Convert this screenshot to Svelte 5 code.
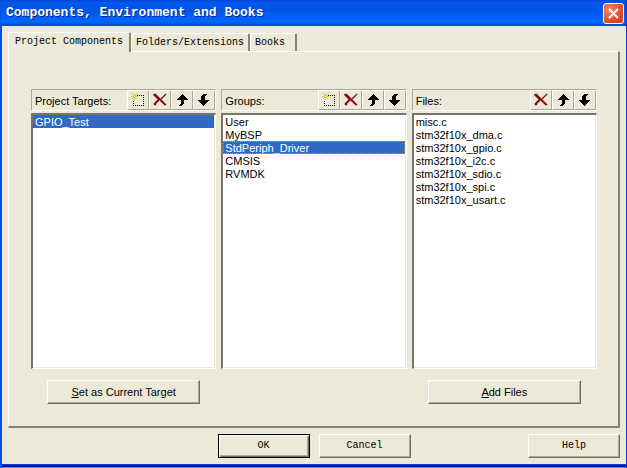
<script>
  const tabs = ['Project Components', 'Folders/Extensions', 'Books'];
  let activeTab = $state(0);
  let columns = $state([
    { title: 'Project Targets:', tools: ['new', 'delete', 'up', 'down'], items: ['GPIO_Test'], selected: 0, focused: false, action: ['S', 'et as Current Target'] },
    { title: 'Groups:', tools: ['new', 'delete', 'up', 'down'], items: ['User', 'MyBSP', 'StdPeriph_Driver', 'CMSIS', 'RVMDK'], selected: 2, focused: true, action: null },
    { title: 'Files:', tools: ['delete', 'up', 'down'], items: ['misc.c', 'stm32f10x_dma.c', 'stm32f10x_gpio.c', 'stm32f10x_i2c.c', 'stm32f10x_sdio.c', 'stm32f10x_spi.c', 'stm32f10x_usart.c'], selected: -1, focused: false, action: ['A', 'dd Files'] }
  ]);
</script>

{#snippet icon(name)}
  <svg width="16" height="16" viewBox="0 0 16 16" shape-rendering="crispEdges" aria-hidden="true">
    {#if name === 'new'}
      <path d="M7 3h1v1h-1zM9 3h1v1h-1zM11 3h1v1h-1zM13 3h1v1h-1zM13 5h1v1h-1zM13 7h1v1h-1zM13 9h1v1h-1zM13 11h1v1h-1zM13 13h1v1h-1zM11 13h1v1h-1zM9 13h1v1h-1zM7 13h1v1h-1zM5 13h1v1h-1zM3 13h1v1h-1zM3 11h1v1h-1zM3 9h1v1h-1z" fill="#000" />
      <path d="M4 1h1v7h-1zM1 4h7v1h-7zM1 1h1v1h-1zM2 2h1v1h-1zM3 3h1v1h-1zM5 3h1v1h-1zM6 2h1v1h-1zM7 1h1v1h-1zM3 5h1v1h-1zM2 6h1v1h-1zM5 5h1v1h-1zM6 6h1v1h-1z" fill="#d3ce4f" />
      <path d="M4 4h1v1h-1z" fill="#fffbd0" />
    {:else if name === 'delete'}
      <path d="M2 2h2v1h1v1h1v1h1v1h1v1h1v-1h1v-1h1v-1h1v-1h1v-1h1v1h-1v1h-1v1h-1v1h-1v1h-1v1h1v1h1v1h1v1h1v1h1v1h-2v-1h-1v-1h-1v-1h-1v-1h-1v-1h-1v1h-1v1h-1v1h-1v2h-2v-2h1v-1h1v-1h1v-1h1v-1h-1v-1h-1v-1h-1v-1h-1v-1h-1z" fill="#850b12" stroke="#850b12" stroke-width="1" shape-rendering="auto" stroke-opacity="0.5" />
    {:else if name === 'up'}
      <path d="M8 2h1v1h1v1h1v1h1v1h1v1h1v1h-4v4h-1v1h-1v1h-3v-1h1v-1h1v-4h-4v-1h1v-1h1v-1h1v-1h1v-1h1v-1h1z" fill="#000" />
    {:else}
      <path d="M10 2h-3v1h-1v1h-1v4h-3v1h1v1h1v1h1v1h1v1h1v1h1v-1h1v-1h1v-1h1v-1h1v-1h1v-1h-4v-4h1v-1h1z" fill="#000" />
    {/if}
  </svg>
{/snippet}

<main class="window">
  <header class="titlebar">
    <h1>Components, Environment and Books</h1>
    <button class="close" aria-label="Close">
      <svg width="17" height="17" viewBox="0 0 17 17" aria-hidden="true"><path d="M4 4l9 9M13 4l-9 9" stroke="#fff" stroke-width="2" /></svg>
    </button>
  </header>

  <div class="body">
    <div class="tabs" role="tablist">
      {#each tabs as tab, i}
        <button class="tab" class:active={activeTab === i} role="tab" aria-selected={activeTab === i} onclick={() => (activeTab = i)}>{tab}</button>
      {/each}
    </div>

    <section class="panel" role="tabpanel" aria-label={tabs[activeTab]}>
      {#each columns as column}
        <div class="column">
          <div class="heading">
            <h2>{column.title}</h2>
            {#each column.tools as tool}
              <button class="tool" aria-label={tool}>{@render icon(tool)}</button>
            {/each}
          </div>
          <div class="list" role="listbox" aria-label={column.title}>
            {#each column.items as item, i}
              <button
                class="item"
                class:selected={column.selected === i}
                class:focused={column.focused && column.selected === i}
                role="option"
                aria-selected={column.selected === i}
                onclick={() => (column.selected = i)}>{item}</button>
            {/each}
          </div>
          <div class="action">
            {#if column.action}
              <button class="push"><u>{column.action[0]}</u>{column.action[1]}</button>
            {/if}
          </div>
        </div>
      {/each}
    </section>

    <footer>
      <span></span>
      <div class="confirm">
        <button class="push mono default">OK</button>
        <button class="push mono">Cancel</button>
      </div>
      <button class="push mono help">Help</button>
    </footer>
  </div>
</main>

<style>
  :global(body) { margin: 0; background: #ece9d8; }
  * { box-sizing: border-box; }
  button { margin: 0; padding: 0; border: 0; border-radius: 0; background: #ece9d8; color: #000; font: inherit; }
  .window {
    display: flex;
    flex-direction: column;
    min-height: 100vh;
    background: #ece9d8;
    border-left: 2px solid #0054e3;
    border-right: 1px solid #0831d9;
    font: 11px/13px "Liberation Sans", Arial, sans-serif;
  }
  .window::after { content: ""; height: 4px; background: linear-gradient(#0841d8 0 1px, #001ea0 1px 3px, #7080c0 3px); }
  .titlebar {
    display: flex;
    align-items: center;
    justify-content: space-between;
    height: 26px;
    padding: 0 2px 0 5px;
    margin-left: -1px;
    background: linear-gradient(#0048d8 0, #0058ee 3px, #0054e3 10px, #0060fa 17px, #0066ff 22px, #0054e6 24px, #0040c4 26px);
  }
  h1 { margin: 0; font: bold 13px/16px "Liberation Mono", "Courier New", monospace; color: #fff; text-shadow: 1px 1px #0a2680; white-space: nowrap; }
  .close {
    display: grid;
    place-items: center;
    width: 21px;
    height: 21px;
    border: 1px solid #fff;
    border-radius: 3px;
    background: radial-gradient(circle at 30% 30%, #ed8a6c, #df4e28 60%, #c63c14);
  }
  .body { display: flex; flex: 1; flex-direction: column; padding: 6px; }
  .tabs { display: flex; align-items: flex-end; height: 19px; font: 10px/12px "Liberation Mono", "Courier New", monospace; }
  .tab {
    height: 18px;
    padding: 1px 4px 0;
    border-top: 1px solid #fff;
    border-left: 1px solid #fff;
    border-right: 2px solid #858374;
    border-radius: 2px 2px 0 0;
    white-space: nowrap;
  }
  .tab:last-child { padding-right: 10px; }
  .tab.active { position: relative; height: 20px; margin-bottom: -1px; padding: 0 6px 1px; }
  .panel {
    display: grid;
    flex: 1;
    grid-template-columns: repeat(3, minmax(0, 1fr));
    gap: 5px;
    padding: 37px 21px 22px 22px;
    border: 1px solid #fff;
    border-right: 2px solid #858374;
    border-bottom: 2px solid #858374;
  }
  .column { display: flex; flex-direction: column; }
  .heading { display: flex; height: 22px; border: 1px solid #aca899; border-right-color: #fff; border-bottom-color: #fff; }
  h2 { flex: 1; margin: 0; padding: 5px 0 0 3px; font: inherit; }
  .tool {
    display: grid;
    place-items: center;
    width: 22px;
    border-top: 1px solid #fff;
    border-left: 1px solid #fff;
    border-right: 1px solid #aca899;
    border-bottom: 1px solid #aca899;
  }
  .list {
    display: flex;
    flex: 1;
    flex-direction: column;
    margin-top: 2px;
    padding: 0 1px 1px 0;
    border: 1px solid #fff;
    border-top: 2px solid #77756a;
    border-left: 2px solid #77756a;
    background: #fff;
    box-shadow: inset -1px -1px #ece9d8;
  }
  .item { flex: none; height: 13px; padding: 1px 2px 0; line-height: 12px; background: none; text-align: left; }
  .item.selected { background: #316ac5; color: #fff; }
  .item.focused { outline: 1px dotted #c79a4a; outline-offset: -1px; }
  .action { display: flex; justify-content: center; height: 35px; padding-top: 11px; }
  .push {
    width: 153px;
    height: 24px;
    border: 1px solid #fff;
    border-right-color: #716f64;
    border-bottom-color: #716f64;
    box-shadow: inset -1px -1px #aca899;
  }
  .mono { width: 92px; font: 10px/12px "Liberation Mono", "Courier New", monospace; }
  .default { border-color: #000; box-shadow: inset 1px 1px #fff, inset -1px -1px #716f64, inset -2px -2px #aca899; }
  footer { display: grid; grid-template-columns: 1fr auto 1fr; padding-top: 6px; }
  .confirm { display: flex; gap: 9px; }
  .help { justify-self: end; }
</style>
